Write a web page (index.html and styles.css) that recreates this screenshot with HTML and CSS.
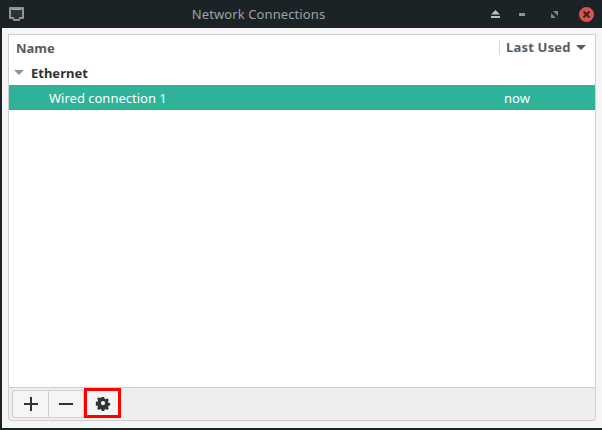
FILE: index.html
```html
<!DOCTYPE html>
<html lang="en">

<head>
    <meta charset="UTF-8">
    <title>Network Connections</title>
    <link rel="stylesheet" href="styles.css">
</head>

<body>
    <div class="window">
        <div class="titlebar">
            <svg class="app-icon" width="15" height="14" viewBox="0 0 15 14">
                <path d="M1 0h13a1 1 0 0 1 1 1v10a1 1 0 0 1-1 1h-3v1a1 1 0 0 1-1 1H5a1 1 0 0 1-1-1v-1H1a1 1 0 0 1-1-1V1a1 1 0 0 1 1-1z" fill="#8f9494"/>
                <path d="M2 2h11v8h-3v2H5v-2H2z" fill="#2d3234"/>
                <path d="M2.500 2h10v1h-10z" fill="#d8a83c"/>
            </svg>
            <div class="title">Network Connections</div>
            <div class="controls">
                <div class="ctl ctl-eject">
                    <svg width="9" height="8" viewBox="0 0 9 8">
                        <path d="M4.500 0l4.500 4.500H0z" fill="#b4c4c4"/>
                        <path d="M0 6h9v2H0z" fill="#b4c4c4"/>
                    </svg>
                </div>
                <div class="ctl">
                    <svg width="6" height="3" viewBox="0 0 6 3">
                        <path d="M0 0h6v3H0z" fill="#8a9496"/>
                    </svg>
                </div>
                <div class="ctl">
                    <svg width="7" height="7" viewBox="0 0 7 7">
                        <path d="M2 0h5v5zM0 2l5 5H0z" fill="#7d8688"/>
                    </svg>
                </div>
                <div class="ctl">
                    <div class="close">
                        <svg width="9" height="9" viewBox="0 0 9 9">
                            <path d="M1.500 1.500l6 6M7.500 1.500l-6 6" stroke="#232a2c" stroke-width="2" fill="none"/>
                        </svg>
                    </div>
                </div>
            </div>
        </div>
        <div class="content">
            <div class="list">
                <div class="list-head">
                    <div class="col-name">Name</div>
                    <div class="col-used">Last Used <span class="arrow head-arrow"></span></div>
                </div>
                <div class="group"><span class="arrow group-arrow"></span>Ethernet</div>
                <div class="row">
                    <div class="row-name">Wired connection 1</div>
                    <div class="row-used">now</div>
                </div>
            </div>
            <div class="toolbar">
                <div class="btn-group">
                    <div class="btn">
                        <svg width="16" height="16" viewBox="0 0 16 16">
                            <path d="M1 8h14M8 1v14" stroke="#2e3436" stroke-width="2" fill="none"/>
                        </svg>
                    </div>
                    <div class="btn">
                        <svg width="16" height="16" viewBox="0 0 16 16">
                            <path d="M1 8h14" stroke="#2e3436" stroke-width="2" fill="none"/>
                        </svg>
                    </div>
                    <div class="btn btn-marked">
                        <svg width="16" height="16" viewBox="0 0 16 16">
                            <path fill-rule="evenodd" fill="#2e3436" d="M6.600 1h2.800l.4 2 1.300.6 1.800-1.100 2 2-1.100 1.800.6 1.300 2 .4v2.800l-2 .4-.6 1.300 1.100 1.800-2 2-1.800-1.100-1.300.6-.4 2H6.600l-.4-2-1.300-.6-1.800 1.100-2-2 1.100-1.800-.6-1.300-2-.4V6.600l2-.4.6-1.300-1.100-1.800 2-2 1.800 1.100 1.300-.6zM8 5.500a2.500 2.500 0 1 0 0 5 2.500 2.500 0 0 0 0-5z" transform="translate(1.200 1.200) scale(.85)"/>
                        </svg>
                    </div>
                </div>
            </div>
        </div>
    </div>
</body>

</html>
```

FILE: styles.css
```css
body {
    margin: 0;
    background: #1c2326;
    font-family: 'Noto Sans', sans-serif;
    font-size: 13px;
}

.window {
    width: 602px;
    height: 430px;
    display: flex;
    flex-direction: column;
    overflow: hidden;
}

.titlebar {
    height: 28px;
    flex: none;
    display: flex;
    align-items: center;
    padding-left: 9px;
    color: #9aa3a5;
}

.title {
    flex: 1;
    text-align: center;
    padding-left: 14px;
    letter-spacing: 0.1px;
}

.controls {
    display: flex;
    align-items: center;
}

.ctl {
    width: 32px;
    display: flex;
    align-items: center;
    justify-content: center;
}

.ctl-eject {
    margin-right: -5px;
}

.close {
    width: 15px;
    height: 15px;
    border-radius: 50%;
    background: #d9534f;
    display: flex;
    align-items: center;
    justify-content: center;
}

.content {
    height: 400px;
    margin-left: 2px;
    padding: 6px 6px 7px 6px;
    box-sizing: border-box;
    background: #f5f5f5;
    display: flex;
    flex-direction: column;
}

.list {
    flex: 1;
    background: #fff;
    border: 1px solid #cfcfcf;
    border-bottom: none;
    color: #2e3436;
}

.list-head {
    height: 25px;
    display: flex;
    align-items: center;
    font-weight: 700;
    color: #565c60;
}

.col-name {
    flex: 1;
    padding-left: 7px;
}

.col-used {
    width: 96px;
    box-sizing: border-box;
    padding-left: 6px;
    border-left: 1px solid #d8d8d8;
    line-height: 15px;
    letter-spacing: 0.2px;
}

.arrow {
    display: inline-block;
    width: 0;
    height: 0;
    border-left: 5px solid transparent;
    border-right: 5px solid transparent;
    border-top: 5px solid #565c60;
    vertical-align: 2px;
}

.head-arrow {
    margin-left: 2px;
}

.group {
    height: 25px;
    display: flex;
    align-items: center;
    padding-left: 5px;
    font-weight: 700;
}

.group-arrow {
    border-top-color: #8f9496;
    margin-right: 7px;
}

.row {
    height: 25px;
    display: flex;
    align-items: center;
    background: #2eb398;
    color: #fff;
}

.row-name {
    flex: 1;
    padding-left: 40px;
}

.row-used {
    width: 91px;
}

.toolbar {
    height: 34px;
    flex: none;
    box-sizing: border-box;
    padding: 2px 3px;
    background: #eeeeee;
    border: 1px solid #cfcfcf;
    border-radius: 0 0 3px 3px;
}

.btn-group {
    display: flex;
    height: 28px;
}

.btn {
    width: 35px;
    box-sizing: border-box;
    display: flex;
    align-items: center;
    justify-content: center;
    background: #f5f5f5;
    border: 1px solid #cfcfcf;
    border-left: none;
}

.btn:first-child {
    width: 37px;
    border-left: 1px solid #cfcfcf;
    border-radius: 3px 0 0 3px;
}

.btn-marked {
    width: 37px;
    height: 30px;
    margin-top: -2px;
    border: 3px solid #ff0000;
}
```
